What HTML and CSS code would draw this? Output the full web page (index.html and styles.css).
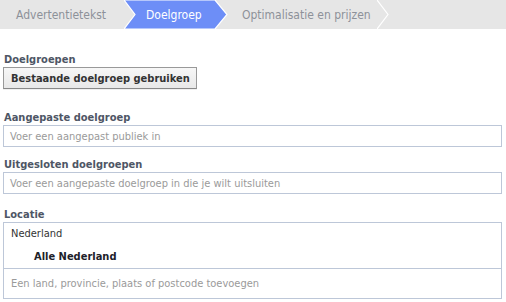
FILE: index.html
```html
<!DOCTYPE html>
<html lang="nl">
<head>
<meta charset="utf-8">
<link rel="stylesheet" href="styles.css">
</head>
<body>
<div class="tabs">
  <div class="tab first">Advertentietekst</div>
  <div class="tab active">
    <svg class="tab-bg" width="104" height="29" viewBox="0 0 104 29" preserveAspectRatio="none"><polygon points="0,0 91,0 103,14.5 91,29 0,29 11,14.5" fill="#6d8ef7" stroke="#ffffff" stroke-width="1.2"/></svg>
    <span class="tab-label">Doelgroep</span>
  </div>
  <div class="tab third">Optimalisatie en prijzen</div>
  <svg class="sep" width="12" height="29" viewBox="0 0 12 29"><polyline points="0,0 11,14.5 0,29" fill="none" stroke="#ffffff" stroke-width="1.2"/></svg>
</div>

<div class="form">
  <div class="field field-button">
    <div class="label">Doelgroepen</div>
    <button class="btn" type="button">Bestaande doelgroep gebruiken</button>
  </div>
  <div class="field">
    <div class="label">Aangepaste doelgroep</div>
    <div class="input"><span class="ph">Voer een aangepast publiek in</span></div>
  </div>
  <div class="field field-wide">
    <div class="label">Uitgesloten doelgroepen</div>
    <div class="input"><span class="ph">Voer een aangepaste doelgroep in die je wilt uitsluiten</span></div>
  </div>
  <div class="field">
    <div class="label">Locatie</div>
    <div class="locbox">
      <div class="loc-list">
        <div class="country">Nederland</div>
        <div class="region">Alle Nederland</div>
      </div>
      <div class="loc-add"><span class="ph">Een land, provincie, plaats of postcode toevoegen</span></div>
    </div>
  </div>
</div>
</body>
</html>
```

FILE: styles.css
```css
html, body {
  margin: 0;
  padding: 0;
  background: #ffffff;
}
body {
  font-family: "DejaVu Sans Condensed", "DejaVu Sans", sans-serif;
  font-stretch: condensed;
  font-size: 11px;
  color: #333333;
  width: 506px;
  overflow: hidden;
}
.tabs {
  display: flex;
  align-items: stretch;
  height: 29px;
  background: #e6e6e6;
  font-size: 12px;
}
.tab {
  display: flex;
  align-items: center;
  color: #8d9199;
  white-space: nowrap;
}
.tab.first {
  padding: 0 14px 0 16px;
  width: 94px;
}
.tab.active {
  position: relative;
  width: 104px;
  padding-left: 22px;
  box-sizing: border-box;
  color: #ffffff;
}
.tab-bg {
  position: absolute;
  left: 0;
  top: 0;
}
.tab-label {
  position: relative;
}
.tab.third {
  padding-left: 14px;
  width: 135px;
}
.sep {
  display: block;
}
.form {
  padding: 24px 4px 0 3px;
}
.field {
  margin-bottom: 11px;
}
.field-button {
  margin-bottom: 22px;
}
.field-wide {
  margin-bottom: 14px;
}
.label {
  font-weight: bold;
  color: #4e5665;
  line-height: 13px;
  margin-bottom: 1px;
  padding-left: 1px;
}
.btn {
  display: block;
  font-family: inherit;
  font-stretch: condensed;
  font-size: 11px;
  font-weight: bold;
  color: #333333;
  height: 22px;
  padding: 0 6px 0 7px;
  border: 1px solid #999999;
  border-bottom-color: #888888;
  background: linear-gradient(#f7f7f7, #e8e8e8);
  box-shadow: 0 1px 0 rgba(0,0,0,0.06);
  margin: 0;
}
.input {
  height: 20px;
  border: 1px solid #bdc7d8;
  display: flex;
  align-items: center;
  padding-left: 6px;
}
.ph {
  color: #9a9a9a;
  white-space: nowrap;
}
.locbox {
  border: 1px solid #bdc7d8;
}
.loc-list {
  padding: 4px 0 4px 7px;
  border-bottom: 1px solid #bdc7d8;
}
.country {
  line-height: 14px;
  color: #333333;
}
.region {
  line-height: 14px;
  margin-top: 9px;
  padding-left: 23px;
  font-weight: bold;
  color: #1d2129;
}
.loc-add {
  height: 29px;
  display: flex;
  align-items: center;
  padding-left: 7px;
}
```
